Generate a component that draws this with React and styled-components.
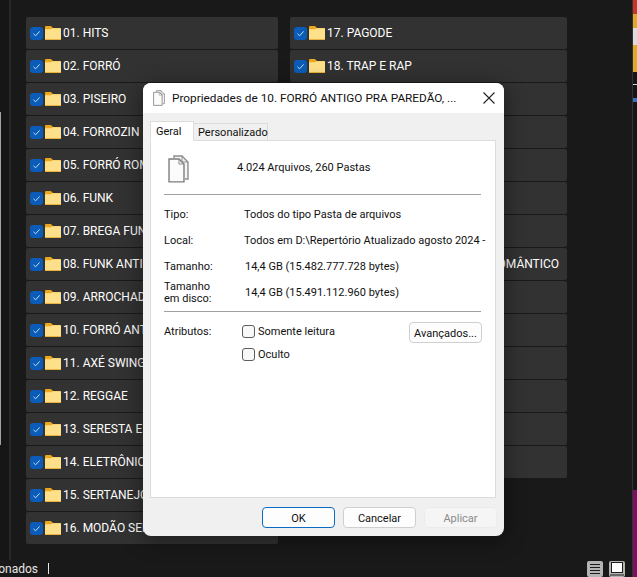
import React from "react";
import styled, { createGlobalStyle } from "styled-components";

const Global = createGlobalStyle`
  html, body { margin: 0; padding: 0; background: #191919; }
  * { box-sizing: border-box; }
  body { font-family: Roboto, "Liberation Sans", sans-serif; }
`;

const left = [
  "01. HITS", "02. FORRÓ", "03. PISEIRO", "04. FORROZIN", "05. FORRÓ ROMÂNTICO", "06. FUNK",
  "07. BREGA FUNK", "08. FUNK ANTIGO", "09. ARROCHADEIRA", "10. FORRÓ ANTIGO PRA PAREDÃO",
  "11. AXÉ SWINGUEIRA", "12. REGGAE", "13. SERESTA E ARROCHA", "14. ELETRÔNICA", "15. SERTANEJO",
  "16. MODÃO SERTANEJO",
];

const right = [
  "17. PAGODE", "18. TRAP E RAP", "", "", "", "", "", "24. SERTANEJO E PAGODE 90 ROMÂNTICO",
  "", "", "", "", "", "",
];

const thumb = [
  [14, "#c8352a"], [14, "#e0a92a"], [17, "#dcdcdc"], [27, "#e0a92a"], [12, "#161616"],
  [1, "#cfcfcf"], [13, "#161616"], [4, "#3a6fc0"], [388, "#161616"], [0, "#7c1163"],
];

const Page = styled.div`
  width: 637px;
  height: 577px;
  display: flex;
  overflow: hidden;
  position: relative;
  background: #191919;
`;

const Shell = styled.div`
  flex: 1;
  display: flex;
  flex-direction: column;
  min-width: 0;
`;

const Main = styled.div`
  flex: 1;
  display: flex;
  min-height: 0;
`;

const Sidebar = styled.div`
  width: 11px;
  border-right: 2px solid #272727;
  background: #161616;
  padding-top: 112px;
`;

const SideEdge = styled.div`
  width: 1px;
  height: 333px;
  background: #a3a3a3;
`;

const Grid = styled.div`
  display: flex;
  align-items: flex-start;
  gap: 12px;
  padding: 17px 0 0 15px;
`;

const Column = styled.div`
  width: ${(p) => p.$w}px;
  display: flex;
  flex-direction: column;
  gap: 1px;
`;

const Row = styled.div`
  height: 32px;
  display: flex;
  align-items: center;
  gap: 2px;
  padding-left: 4px;
  background: #323232;
  border-radius: 2px;
  color: #fff;
  font-size: 12px;
  line-height: 30px;
  white-space: nowrap;
`;

const Status = styled.div`
  height: 17px;
  display: flex;
  align-items: center;
  background: #191919;
  color: #e6e6e6;
  font-size: 12px;
`;

const StatusClip = styled.div`
  width: 38px;
  display: flex;
  justify-content: flex-end;
  overflow: hidden;
  white-space: nowrap;
`;

const Caret = styled.div`
  width: 1px;
  height: 11px;
  margin-left: 10px;
  background: #e6e6e6;
`;

const ViewButtons = styled.div`
  margin-left: auto;
  margin-right: 7px;
  display: flex;
  gap: 6px;
`;

const ViewButton = styled.div`
  width: 16px;
  height: 16px;
  background: #b4b4b4;
  border-radius: 2px;
  display: flex;
`;

const Thumb = styled.div`
  width: 5px;
  display: flex;
  flex-direction: column;
  border-left: 1px solid #333;
`;

const ThumbPart = styled.div`
  height: ${(p) => p.$h}px;
  flex: ${(p) => (p.$h ? "none" : 1)};
  background: ${(p) => p.$c};
`;

const Dialog = styled.div`
  position: absolute;
  left: 143px;
  top: 83px;
  width: 361px;
  height: 453px;
  display: flex;
  flex-direction: column;
  background: #f0f0f0;
  border-radius: 8px;
  overflow: hidden;
  box-shadow: 0 4px 22px rgba(0, 0, 0, 0.45);
  color: #111;
  font-size: 11px;
`;

const TitleBar = styled.div`
  height: 30px;
  flex: none;
  display: flex;
  align-items: center;
  gap: 7px;
  padding: 0 9px 0 10px;
  background: #fff;
  font-size: 11.8px;
  white-space: nowrap;
`;

const TitleText = styled.div`
  flex: 1;
`;

const Tabs = styled.div`
  height: 28px;
  flex: none;
  display: flex;
  align-items: flex-end;
  padding-left: 7px;
  margin-bottom: -1px;
  position: relative;
`;

const Tab = styled.div`
  height: ${(p) => (p.$active ? 20 : 18)}px;
  width: ${(p) => (p.$active ? 44 : 74)}px;
  padding-left: ${(p) => (p.$active ? 5 : 4)}px;
  display: flex;
  align-items: center;
  background: ${(p) => (p.$active ? "#fff" : "#f0f0f0")};
  border: 1px solid #dcdcdc;
  border-bottom: ${(p) => (p.$active ? "1px solid #fff" : "1px solid #dcdcdc")};
  border-left: ${(p) => (p.$active ? "1px solid #dcdcdc" : "none")};
`;

const Panel = styled.div`
  height: 358px;
  flex: none;
  margin: 0 8px 0 7px;
  padding: 14px 14px 0 13px;
  background: #fff;
  border: 1px solid #dcdcdc;
  display: flex;
  flex-direction: column;
`;

const Summary = styled.div`
  height: 38px;
  display: flex;
  align-items: flex-start;
  gap: 48px;
  padding-left: 4px;
  margin-bottom: 1px;
`;

const SummaryText = styled.span`
  line-height: 26px;
`;

const Divider = styled.div`
  height: 1px;
  flex: none;
  background: #a0a0a0;
`;

const Details = styled.div`
  display: grid;
  grid-template-columns: 80px 1fr;
  grid-auto-rows: 26px;
  padding: 6px 0;
  align-items: center;
`;

const Label = styled.div`
  line-height: 12px;
  padding-top: 1px;
`;

const AttrLabel = styled(Label)`
  padding-top: 4px;
`;

const Value = styled.div`
  white-space: nowrap;
  overflow: hidden;
  margin-right: -6px;
  margin-left: ${(p) => (p.$indent ? 1 : 0)}px;
`;

const Attrs = styled.div`
  display: grid;
  grid-template-columns: 78px 1fr auto;
  padding-top: 10px;
  margin-right: -1px;
`;

const AttrList = styled.div`
  display: flex;
  flex-direction: column;
  gap: 10px;
  padding-top: 3px;
`;

const Check = styled.label`
  height: 13px;
  display: flex;
  align-items: center;
  gap: 3px;
`;

const Box = styled.span`
  width: 13px;
  height: 13px;
  background: #f8f8f8;
  border: 1px solid #5c5c5c;
  border-radius: 3px;
`;

const Button = styled.div`
  width: ${(p) => p.$w || 73}px;
  height: 21px;
  padding-top: 1px;
  display: flex;
  align-items: center;
  justify-content: center;
  background: ${(p) => (p.$disabled ? "#f5f5f5" : "#fdfdfd")};
  color: ${(p) => (p.$disabled ? "#8a8a8a" : "#111")};
  border: 1px solid ${(p) => (p.$primary ? "#0a6cc4" : p.$disabled ? "#ececec" : "#cfcfcf")};
  border-radius: 4px;
`;

const Footer = styled.div`
  flex: 1;
  display: flex;
  justify-content: flex-end;
  gap: 8px;
  padding: 9px 7px 0 0;
`;

function CheckedBox() {
  return (
    <svg width="13" height="13" viewBox="0 0 13 13" style={{ flex: "none" }}>
      <rect width="13" height="13" rx="3" fill="#0a5cb8" />
      <path d="M3.5 6.8 5.6 8.8 9.6 4.4" fill="none" stroke="#c5dcf5" strokeWidth="1" />
    </svg>
  );
}

function Folder() {
  return (
    <svg width="16" height="14" viewBox="0 0 16 14" style={{ flex: "none" }}>
      <path d="M0 1.2C0 .5.5 0 1.2 0h4.2c.4 0 .7.1 1 .4L8 2h7c.6 0 1 .4 1 1v3H0z" fill="#eaa81f" />
      <path d="M0 4.2C0 3.6.4 3.2 1 3.2h5l1.5-1H15c.6 0 1 .4 1 1V13c0 .6-.4 1-1 1H1c-.6 0-1-.4-1-1z" fill="#ffe08a" />
      <path d="M0 13h16c0 .6-.4 1-1 1H1c-.6 0-1-.4-1-1z" fill="#e9b23c" />
    </svg>
  );
}

function Pages({ size }) {
  return (
    <svg width={size} height={size * 1.33} viewBox="0 0 21 28" fill="none" style={{ flex: "none" }}>
      <path d="M6 3V1h8l6 6v17h-3" stroke="#8c8c8c" strokeWidth="1.4" fill="#f6f6f6" />
      <path d="M1 4h10l5 5v18H1z" stroke="#7d7d7d" strokeWidth="1.4" fill="#fbfbfb" />
      <path d="M11 4v5h5M14 1v6h6" stroke="#8c8c8c" strokeWidth="1" />
    </svg>
  );
}

function Close() {
  return (
    <svg width="12" height="12" viewBox="0 0 12 12" style={{ flex: "none" }}>
      <path d="M.5.5l11 11M11.5.5l-11 11" stroke="#222" strokeWidth="1.1" />
    </svg>
  );
}

function ListView() {
  return (
    <ViewButton>
      <svg width="16" height="16" viewBox="0 0 16 16">
        <path d="M3 3.5h10M3 6.5h10M3 9.5h10M3 12.5h10" stroke="#1c1c1c" strokeWidth="1" />
      </svg>
    </ViewButton>
  );
}

function TileView() {
  return (
    <ViewButton>
      <svg width="16" height="16" viewBox="0 0 16 16">
        <rect x="2.5" y="1.5" width="11" height="10" fill="#fff" stroke="#1c1c1c" />
        <path d="M1 14h14" stroke="#1c1c1c" strokeWidth="1" />
      </svg>
    </ViewButton>
  );
}

function Folders({ items, width }) {
  return (
    <Column $w={width}>
      {items.map((name, i) => (
        <Row key={i}>
          <CheckedBox />
          <Folder />
          <span>{name}</span>
        </Row>
      ))}
    </Column>
  );
}

export default function App() {
  return (
    <Page>
      <Global />
      <Shell>
        <Main>
          <Sidebar>
            <SideEdge />
          </Sidebar>
          <Grid>
            <Folders items={left} width={252} />
            <Folders items={right} width={277} />
          </Grid>
        </Main>
        <Status>
          <StatusClip>
            <span>30 itens selecionados</span>
          </StatusClip>
          <Caret />
          <ViewButtons>
            <ListView />
            <TileView />
          </ViewButtons>
        </Status>
      </Shell>
      <Thumb>
        {thumb.map(([h, c], i) => (
          <ThumbPart key={i} $h={h} $c={c} />
        ))}
      </Thumb>

      <Dialog>
        <TitleBar>
          <Pages size={12} />
          <TitleText>Propriedades de 10. FORRÓ ANTIGO PRA PAREDÃO, ...</TitleText>
          <Close />
        </TitleBar>
        <Tabs>
          <Tab $active>Geral</Tab>
          <Tab>Personalizado</Tab>
        </Tabs>
        <Panel>
          <Summary>
            <Pages size={21} />
            <SummaryText>4.024 Arquivos, 260 Pastas</SummaryText>
          </Summary>
          <Divider />
          <Details>
            <Label>Tipo:</Label>
            <Value>Todos do tipo Pasta de arquivos</Value>
            <Label>Local:</Label>
            <Value>Todos em D:\Repertório Atualizado agosto 2024 - OneDrive</Value>
            <Label>Tamanho:</Label>
            <Value $indent>14,4 GB (15.482.777.728 bytes)</Value>
            <Label>Tamanho<br />em disco:</Label>
            <Value $indent>14,4 GB (15.491.112.960 bytes)</Value>
          </Details>
          <Divider />
          <Attrs>
            <AttrLabel>Atributos:</AttrLabel>
            <AttrList>
              <Check><Box />Somente leitura</Check>
              <Check><Box />Oculto</Check>
            </AttrList>
            <Button $w={73}>Avançados...</Button>
          </Attrs>
        </Panel>
        <Footer>
          <Button $primary>OK</Button>
          <Button>Cancelar</Button>
          <Button $disabled>Aplicar</Button>
        </Footer>
      </Dialog>
    </Page>
  );
}
